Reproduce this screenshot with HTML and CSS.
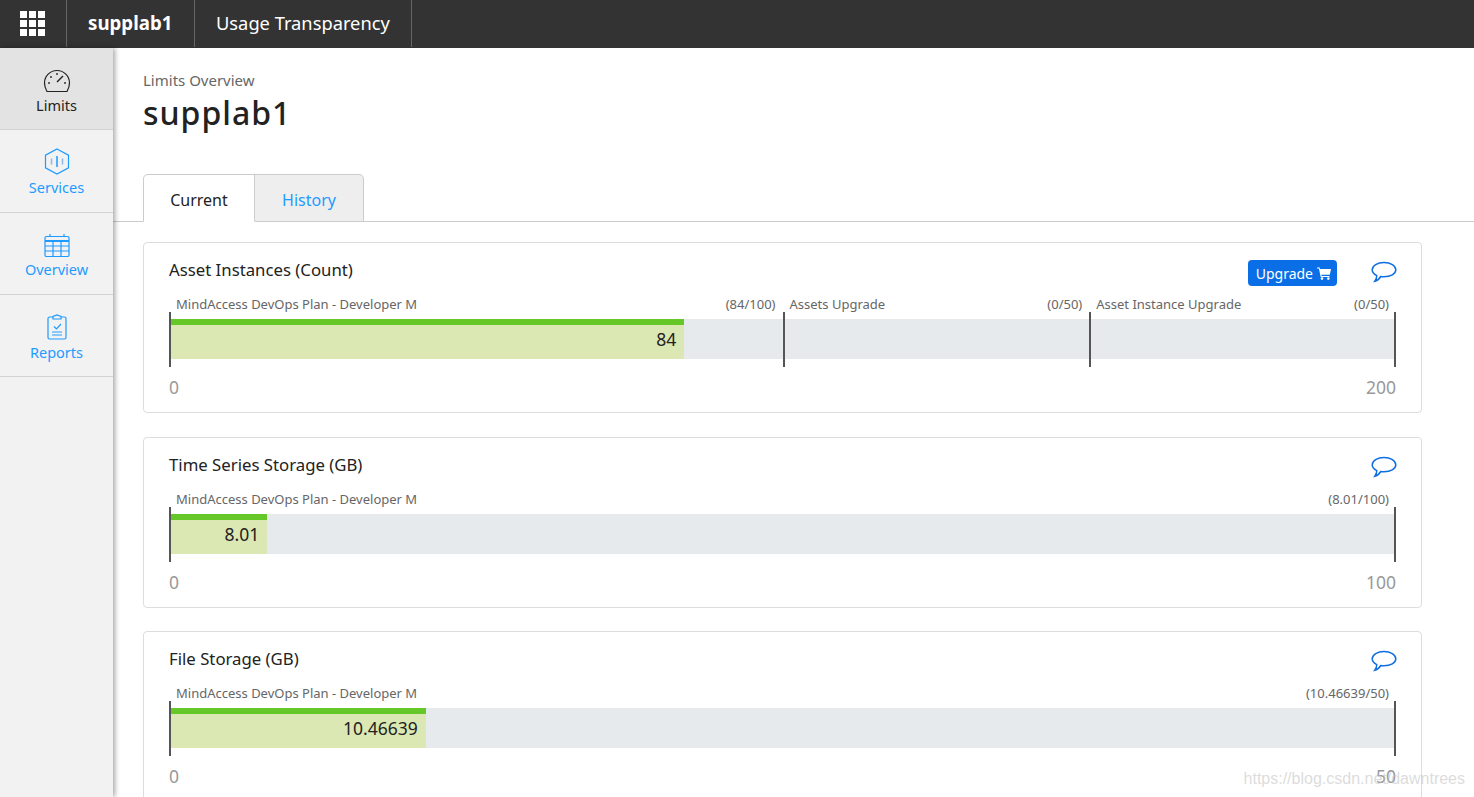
FILE: index.html
```html
<!DOCTYPE html>
<html lang="en">
<head>
    <meta charset="UTF-8">
    <title>Usage Transparency</title>
    <link rel="stylesheet" href="styles.css">
</head>
<body>
    <header class="topbar">
        <div class="topbar-cell apps">
            <svg width="26" height="26" viewBox="0 0 26 26" fill="#fff">
                <rect x="0" y="0" width="7" height="7"/><rect x="9" y="0" width="7" height="7"/><rect x="18" y="0" width="7" height="7"/>
                <rect x="0" y="9" width="7" height="7"/><rect x="9" y="9" width="7" height="7"/><rect x="18" y="9" width="7" height="7"/>
                <rect x="0" y="18" width="7" height="7"/><rect x="9" y="18" width="7" height="7"/><rect x="18" y="18" width="7" height="7"/>
            </svg>
        </div>
        <div class="topbar-cell tenant">supplab1</div>
        <div class="topbar-cell appname">Usage Transparency</div>
    </header>

    <div class="layout">
        <nav class="sidebar">
            <a class="nav-item active">
                <svg width="28" height="24" viewBox="0 0 28 24" fill="none" stroke="#222" stroke-width="1.2">
                    <path d="M4 22.5 H24 Q26.500 18 26.500 14 A12.500 12.500 0 0 0 1.500 14 Q1.500 18 4 22.500 Z"/>
                    <path d="M14 13 L20 7" stroke-width="1.500"/>
                    <circle cx="6" cy="14" r="0.9" fill="#222" stroke="none"/>
                    <circle cx="22" cy="14" r="0.9" fill="#222" stroke="none"/>
                    <circle cx="14" cy="5" r="0.9" fill="#222" stroke="none"/>
                    <circle cx="8" cy="8" r="0.9" fill="#222" stroke="none"/>
                </svg>
                <span>Limits</span>
            </a>
            <a class="nav-item">
                <svg width="26" height="27" viewBox="0 0 26 27" fill="none" stroke="#1e9bff" stroke-width="1.200">
                    <path d="M13 1 L24.500 7.200 V19.800 L13 26 L1.500 19.800 V7.200 Z"/>
                    <path d="M13 8 V19" stroke-width="1.500"/>
                    <path d="M7.500 10.500 V16.500 M18.500 10.500 V16.500" stroke="#8fb8e8" stroke-width="1.500"/>
                </svg>
                <span>Services</span>
            </a>
            <a class="nav-item">
                <svg width="26" height="24" viewBox="0 0 26 24" fill="none" stroke="#1e9bff" stroke-width="1.200">
                    <rect x="1" y="3.500" width="24" height="20" rx="1.500"/>
                    <path d="M1 8 H25" stroke-width="2"/>
                    <path d="M1 13 H25 M1 18 H25 M9 8 V23.500 M17 8 V23.500"/>
                    <path d="M6 1 V3.500 M20 1 V3.500"/>
                </svg>
                <span>Overview</span>
            </a>
            <a class="nav-item">
                <svg width="20" height="26" viewBox="0 0 20 26" fill="none" stroke="#1e9bff" stroke-width="1.200">
                    <path d="M6 3 H2.500 Q1 3 1 4.500 V23.500 Q1 25 2.500 25 H17.500 Q19 25 19 23.500 V4.500 Q19 3 17.500 3 H14"/>
                    <path d="M6 5 V2.500 L10 1 L14 2.500 V5 Z"/>
                    <path d="M7 12.500 L9.500 15 L14 10"/>
                    <path d="M5 18 H15 M5 21 H15"/>
                </svg>
                <span>Reports</span>
            </a>
        </nav>

        <main class="content">
            <div class="page-head">
                <div class="breadcrumb">Limits Overview</div>
                <h1>supplab1</h1>
            </div>

            <div class="tabs">
                <a class="tab current">Current</a>
                <a class="tab">History</a>
            </div>

            <section class="limit-card">
                <div class="card-head">
                    <h2>Asset Instances (Count)</h2>
                    <button class="upgrade">Upgrade
                        <svg width="14" height="13" viewBox="0 0 14 13" fill="#fff">
                            <path d="M0 0.500 H2.600 L3 2 H14 L12.800 7.800 H4.400 L4.700 9 H12.500 V10 H3.700 L1.900 1.500 H0 Z"/>
                            <circle cx="5" cy="11.600" r="1.300"/>
                            <circle cx="11.300" cy="11.600" r="1.300"/>
                        </svg>
                    </button>
                    <svg class="comment" width="26" height="22" viewBox="0 0 26 22" fill="none" stroke="#0f6fe0" stroke-width="1.500">
                        <path d="M13 1.500 C19.500 1.500 24.800 4.500 24.800 8.800 C24.800 13 19.500 15.800 13 15.800 C11.800 15.800 10.800 15.700 9.800 15.500 C8.500 17.500 6.500 19.800 3.800 20.300 C5.200 18.500 5.800 16.500 5.800 14.600 C3 13.200 1.200 11.200 1.200 8.800 C1.200 4.500 6.500 1.500 13 1.500 Z"/>
                    </svg>
                </div>
                <div class="meter">
                    <div class="segment" style="flex-grow: 100">
                        <div class="segment-label"><span>MindAccess DevOps Plan - Developer M</span><span>(84/100)</span></div>
                        <div class="track"><div class="fill" style="width: 84%">84</div></div>
                    </div>
                    <div class="segment" style="flex-grow: 50">
                        <div class="segment-label"><span>Assets Upgrade</span><span>(0/50)</span></div>
                        <div class="track"></div>
                    </div>
                    <div class="segment last" style="flex-grow: 50">
                        <div class="segment-label"><span>Asset Instance Upgrade</span><span>(0/50)</span></div>
                        <div class="track"></div>
                    </div>
                </div>
                <div class="scale"><span>0</span><span>200</span></div>
            </section>

            <section class="limit-card">
                <div class="card-head">
                    <h2>Time Series Storage (GB)</h2>
                    <svg class="comment" width="26" height="22" viewBox="0 0 26 22" fill="none" stroke="#0f6fe0" stroke-width="1.500">
                        <path d="M13 1.500 C19.500 1.500 24.800 4.500 24.800 8.800 C24.800 13 19.500 15.800 13 15.800 C11.800 15.800 10.800 15.700 9.800 15.500 C8.500 17.500 6.500 19.800 3.800 20.300 C5.200 18.500 5.800 16.500 5.800 14.600 C3 13.200 1.200 11.200 1.200 8.800 C1.200 4.500 6.500 1.500 13 1.500 Z"/>
                    </svg>
                </div>
                <div class="meter">
                    <div class="segment last" style="flex-grow: 100">
                        <div class="segment-label"><span>MindAccess DevOps Plan - Developer M</span><span>(8.01/100)</span></div>
                        <div class="track"><div class="fill" style="width: 8.01%">8.01</div></div>
                    </div>
                </div>
                <div class="scale"><span>0</span><span>100</span></div>
            </section>

            <section class="limit-card">
                <div class="card-head">
                    <h2>File Storage (GB)</h2>
                    <svg class="comment" width="26" height="22" viewBox="0 0 26 22" fill="none" stroke="#0f6fe0" stroke-width="1.500">
                        <path d="M13 1.500 C19.500 1.500 24.800 4.500 24.800 8.800 C24.800 13 19.500 15.800 13 15.800 C11.800 15.800 10.800 15.700 9.800 15.500 C8.500 17.500 6.500 19.800 3.800 20.300 C5.200 18.500 5.800 16.500 5.800 14.600 C3 13.200 1.200 11.200 1.200 8.800 C1.200 4.500 6.500 1.500 13 1.500 Z"/>
                    </svg>
                </div>
                <div class="meter">
                    <div class="segment last" style="flex-grow: 100">
                        <div class="segment-label"><span>MindAccess DevOps Plan - Developer M</span><span>(10.46639/50)</span></div>
                        <div class="track"><div class="fill" style="width: 20.93%">10.46639</div></div>
                    </div>
                </div>
                <div class="scale"><span>0</span><span>50</span></div>
            </section>
        </main>
    </div>

    <div class="watermark">https://blog.csdn.net/dawntrees</div>
</body>
</html>
```

FILE: styles.css
```css
html, body {
    height: 100%;
}

body {
    margin: 0;
    overflow: hidden;
    font-family: "Noto Sans", "Open Sans", Arial, sans-serif;
    color: #222;
    background: #fff;
}

/* top bar */
.topbar {
    display: flex;
    height: 48px;
    background: #333;
    color: #fff;
}

.topbar-cell {
    display: flex;
    align-items: center;
    box-sizing: border-box;
    height: 47px;
    padding-bottom: 2px;
    border-right: 1px solid #666;
}

.apps {
    width: 67px;
    padding-left: 20px;
    padding-bottom: 0;
}

.tenant {
    width: 128px;
    padding-left: 21px;
    font-size: 18.700px;
    font-weight: 700;
}

.appname {
    width: 217px;
    padding-left: 21px;
    font-size: 18.300px;
}

.layout {
    display: flex;
    height: calc(100vh - 48px);
}

/* side nav */
.sidebar {
    flex: none;
    width: 113px;
    background: #f2f2f2;
    box-shadow: 2px 0 5px rgba(0,0,0,0.35);
    position: relative;
    z-index: 1;
}

.nav-item {
    display: flex;
    flex-direction: column;
    align-items: center;
    justify-content: flex-end;
    box-sizing: border-box;
    height: 82.330px;
    padding-bottom: 14.500px;
    gap: 3px;
    border-bottom: 1px solid #d2d2d2;
    color: #1e9bff;
    font-size: 14.500px;
    line-height: 19px;
}

.nav-item.active {
    background: #e3e3e3;
    color: #222;
}

/* main */
.content {
    flex: 1;
    min-width: 0;
}

.page-head {
    padding: 22px 30px 0;
    height: 104px;
}

.breadcrumb {
    font-size: 15px;
    line-height: 20px;
    color: #666;
}

h1 {
    margin: 0;
    font-size: 32px;
    line-height: 46px;
    font-weight: 500;
    letter-spacing: 1px;
    color: #222;
}

.tabs {
    display: flex;
    height: 47px;
    padding-left: 30px;
    border-bottom: 1px solid #ccc;
    margin-bottom: 20px;
}

.tab {
    box-sizing: border-box;
    height: 48px;
    width: 109px;
    padding-top: 13px;
    text-align: center;
    font-size: 16px;
    line-height: 24px;
    color: #1e9bff;
    background: #eee;
    border: 1px solid #ccc;
    border-left: none;
    border-radius: 0 5px 0 0;
}

.tab.current {
    width: 112px;
    color: #222;
    background: #fff;
    border-left: 1px solid #ccc;
    border-right: 1px solid #ccc;
    border-bottom-color: #fff;
    border-radius: 5px 0 0 0;
}

/* limit cards */
.limit-card {
    box-sizing: border-box;
    width: 1279px;
    height: 171px;
    margin: 0 0 23.500px 30px;
    padding: 14px 25px 0 25px;
    border: 1px solid #ddd;
    border-radius: 4px;
    background: #fff;
}

.card-head {
    display: flex;
    align-items: flex-start;
    height: 38px;
}

h2 {
    flex: 1;
    margin: 0;
    font-size: 16.750px;
    line-height: 26px;
    font-weight: 400;
    color: #222;
}

.upgrade {
    display: flex;
    align-items: center;
    gap: 4px;
    height: 26px;
    padding: 0 6px 0 8px;
    margin: 3px 34px 0 0;
    border: none;
    border-radius: 4px;
    background: #0a6fe6;
    color: #fff;
    font-family: inherit;
    font-size: 14px;
}

.comment {
    margin: 4px -1px 0 0;
}

.meter {
    display: flex;
    height: 72px;
}

.segment {
    flex: 1 1 0;
    min-width: 0;
    display: flex;
    flex-direction: column;
    position: relative;
}

/* tick marks sit over the track */
.segment::before {
    content: "";
    position: absolute;
    left: 0;
    bottom: 0;
    width: 2px;
    height: 55px;
    background: #555;
    z-index: 1;
}

.segment.last::after {
    content: "";
    position: absolute;
    right: 0;
    bottom: 0;
    width: 2px;
    height: 55px;
    background: #555;
    z-index: 1;
}

.segment-label {
    display: flex;
    justify-content: space-between;
    height: 24px;
    padding: 0 7px 0 7px;
    font-size: 13px;
    line-height: 18px;
    color: #666;
}

.track {
    height: 40px;
    background: #e7eaed;
}

.fill {
    box-sizing: border-box;
    height: 40px;
    border-top: 6px solid #66c828;
    background: #dbe8b3;
    padding-right: 8px;
    text-align: right;
    font-size: 17.500px;
    line-height: 29px;
    color: #222;
}

.scale {
    display: flex;
    justify-content: space-between;
    margin-top: 8px;
    font-size: 17.500px;
    line-height: 24px;
    color: #999;
}

.watermark {
    position: absolute;
    right: 9px;
    bottom: 8px;
    font-family: "Liberation Sans", Arial, sans-serif;
    font-size: 16px;
    line-height: 20px;
    color: rgba(190,190,190,0.55);
}
```
